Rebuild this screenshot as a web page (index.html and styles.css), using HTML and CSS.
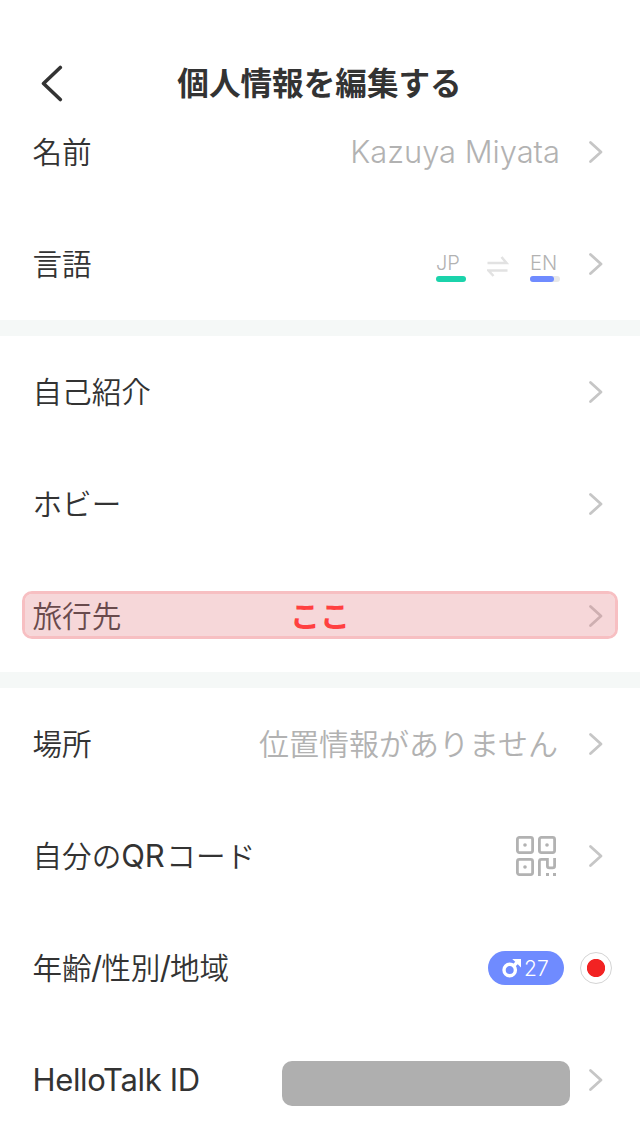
FILE: index.html
```html
<!DOCTYPE html>
<html lang="ja">
<head>
  <meta charset="UTF-8">
  <title>個人情報を編集する</title>
  <link rel="stylesheet" href="styles.css">
</head>
<body>

  <!-- Chevron shared by the rows -->
  <svg class="defs" width="0" height="0">
    <symbol id="chevron" viewBox="0 0 16 24">
      <path d="M2.5 2.5 L13 12 L2.5 21.5" fill="none" stroke="currentColor" stroke-width="2.8" stroke-linecap="round" stroke-linejoin="round"/>
    </symbol>
  </svg>

  <header class="header">
    <svg class="back" width="24" height="38" viewBox="0 0 24 38">
      <path d="M20.3 3.5 L3.5 19.5 L20.3 35.5" fill="none" stroke="currentColor" stroke-width="3.6" stroke-linecap="round" stroke-linejoin="round"/>
    </svg>
    <h1>個人情報を編集する</h1>
  </header>

  <section class="group">
    <div class="row">
      <span class="label">名前</span>
      <span class="value name">Kazuya Miyata</span>
      <svg class="chevron"><use href="#chevron"/></svg>
    </div>
    <div class="row">
      <span class="label">言語</span>
      <div class="languages">
        <div class="lang">JP<div class="level native"></div></div>
        <svg class="swap" width="22" height="22" viewBox="0 0 22 22" fill="none" stroke="currentColor" stroke-width="2.5">
          <path d="M0.5 8 H19.5 L14.5 2"/>
          <path d="M20.5 15.5 H1.5 L6.5 21"/>
        </svg>
        <div class="lang">EN<div class="level learning"></div></div>
      </div>
      <svg class="chevron"><use href="#chevron"/></svg>
    </div>
  </section>

  <section class="group">
    <div class="row">
      <span class="label">自己紹介</span>
      <svg class="chevron"><use href="#chevron"/></svg>
    </div>
    <div class="row">
      <span class="label">ホビー</span>
      <svg class="chevron"><use href="#chevron"/></svg>
    </div>
    <div class="row">
      <span class="label">旅行先</span>
      <svg class="chevron"><use href="#chevron"/></svg>
      <div class="highlight"><span>ここ</span></div>
    </div>
  </section>

  <section class="group">
    <div class="row">
      <span class="label">場所</span>
      <span class="value">位置情報がありません</span>
      <svg class="chevron"><use href="#chevron"/></svg>
    </div>
    <div class="row">
      <span class="label">自分の<span class="latin">QR</span><span class="kana">コード</span></span>
      <svg class="qr" width="42" height="42" viewBox="0 0 42 42" fill="none" stroke="currentColor" stroke-width="2.8">
        <rect x="2.4" y="2.4" width="15.2" height="15.2" rx="2"/>
        <rect x="24.4" y="2.4" width="15.2" height="15.2" rx="2"/>
        <rect x="2.4" y="24.4" width="15.2" height="15.2" rx="2"/>
        <path d="M24.4 41 V26.4 Q24.4 24.4 26.4 24.4 H32.4 V31 Q32.4 32.8 34.4 32.8 H37.6 Q39.6 32.8 39.6 31 V23"/>
        <g fill="currentColor" stroke="none">
          <circle cx="10" cy="10" r="1.8"/>
          <circle cx="32" cy="10" r="1.8"/>
          <circle cx="10" cy="32" r="1.8"/>
          <rect x="31" y="38" width="3" height="3"/>
          <rect x="38" y="38" width="3" height="3"/>
        </g>
      </svg>
      <svg class="chevron"><use href="#chevron"/></svg>
    </div>
    <div class="row">
      <span class="label">年齢<span class="slash">/</span>性別<span class="slash">/</span>地域</span>
      <div class="badge">
        <svg width="20" height="20" viewBox="0 0 20 20">
          <circle cx="7.7" cy="12" r="5.7" fill="none" stroke="currentColor" stroke-width="3.4"/>
          <path d="M11.5 8 L15 4.5" stroke="currentColor" stroke-width="3.4"/>
          <path d="M10.2 1 H19 V9.5 L16 6.5 L13.2 3.8 Z" fill="currentColor"/>
        </svg>
        27
      </div>
      <div class="flag"></div>
    </div>
    <div class="row">
      <span class="label latin">HelloTalk ID</span>
      <div class="masked"></div>
      <svg class="chevron"><use href="#chevron"/></svg>
    </div>
  </section>

</body>
</html>
```
FILE: styles.css
```css
* {
  box-sizing: border-box;
}

body {
  margin: 0;
  background-color: #fff;
  color: #333;
  font-family: Inter, "Noto Sans CJK JP", sans-serif;
}

.defs {
  display: block;
}

.header {
  display: flex;
  align-items: flex-start;
  height: 96px;
  padding: 64px 40px 0;
}

.back {
  flex: none;
}

h1 {
  flex: 1;
  margin: 0 25px 0 0;
  font-size: 31.6px;
  line-height: 40px;
  font-weight: 700;
  text-align: center;
}

.group + .group {
  border-top: 16px solid #f5f8f7;
}

.row {
  position: relative;
  display: flex;
  align-items: center;
  height: 112px;
  padding: 0 36px 0 32px;
}

.label {
  flex: 1;
  padding-left: 0.5px;
  font-size: 29.6px;
  font-weight: 350;
  line-height: 40px;
}

.latin {
  font-size: 31px;
  font-weight: 400;
  letter-spacing: -0.35px;
}

.kana {
  margin-left: 2px;
  letter-spacing: 0.2px;
}

.slash {
  font-size: 31px;
  font-weight: 400;
  margin: 0 -0.8px;
}

.value {
  margin-right: 2px;
  color: #b2b2b2;
  font-size: 30px;
  font-weight: 350;
  line-height: 40px;
}

.name {
  margin-right: 0;
  font-size: 30.9px;
}

.chevron {
  flex: none;
  width: 16px;
  height: 24px;
  margin-left: 28px;
  color: #c6c6c6;
}

.languages {
  display: flex;
  align-items: center;
  gap: 21px;
}

.lang {
  width: 30px;
  padding-top: 4px;
  color: #b2b2b2;
  font-size: 20px;
  font-weight: 350;
  line-height: 26px;
}

.level {
  height: 6px;
  border-radius: 3px;
}

.native {
  background-color: #1bd3ab;
}

.learning {
  background-color: #e8e8e8;
}

.learning::before {
  content: "";
  display: block;
  width: 24px;
  height: 6px;
  border-radius: 3px;
  background-color: #6f8bff;
}

.swap {
  margin-top: 4px;
  color: #e2e2e2;
}

/* marker laid over the row */
.highlight {
  position: absolute;
  top: 31px;
  left: 22px;
  right: 22px;
  height: 48px;
  border: 3px solid #f7bfc2;
  border-radius: 10px;
  background-color: rgba(226, 126, 131, 0.31);
  background-clip: padding-box;
  color: #ff4040;
  font-size: 30px;
  font-weight: 700;
  line-height: 44px;
  text-align: center;
}

.qr {
  margin-right: 3px;
  color: #b2b2b2;
}

.badge {
  display: flex;
  align-items: center;
  gap: 2px;
  width: 76px;
  height: 34px;
  padding-left: 14px;
  border-radius: 17px;
  background-color: #6f8bff;
  color: #fff;
  font-size: 21px;
  font-weight: 350;
}

.flag {
  width: 32px;
  height: 32px;
  margin: 0 -8px 0 16px;
  border: 1px solid #d4d4d4;
  border-radius: 50%;
  background: radial-gradient(circle, #f22323 8.7px, #fff 9.5px);
}

.masked {
  width: 288px;
  height: 45px;
  margin: 7px -10px 0 0;
  border-radius: 10px;
  background-color: #afafaf;
}
```
